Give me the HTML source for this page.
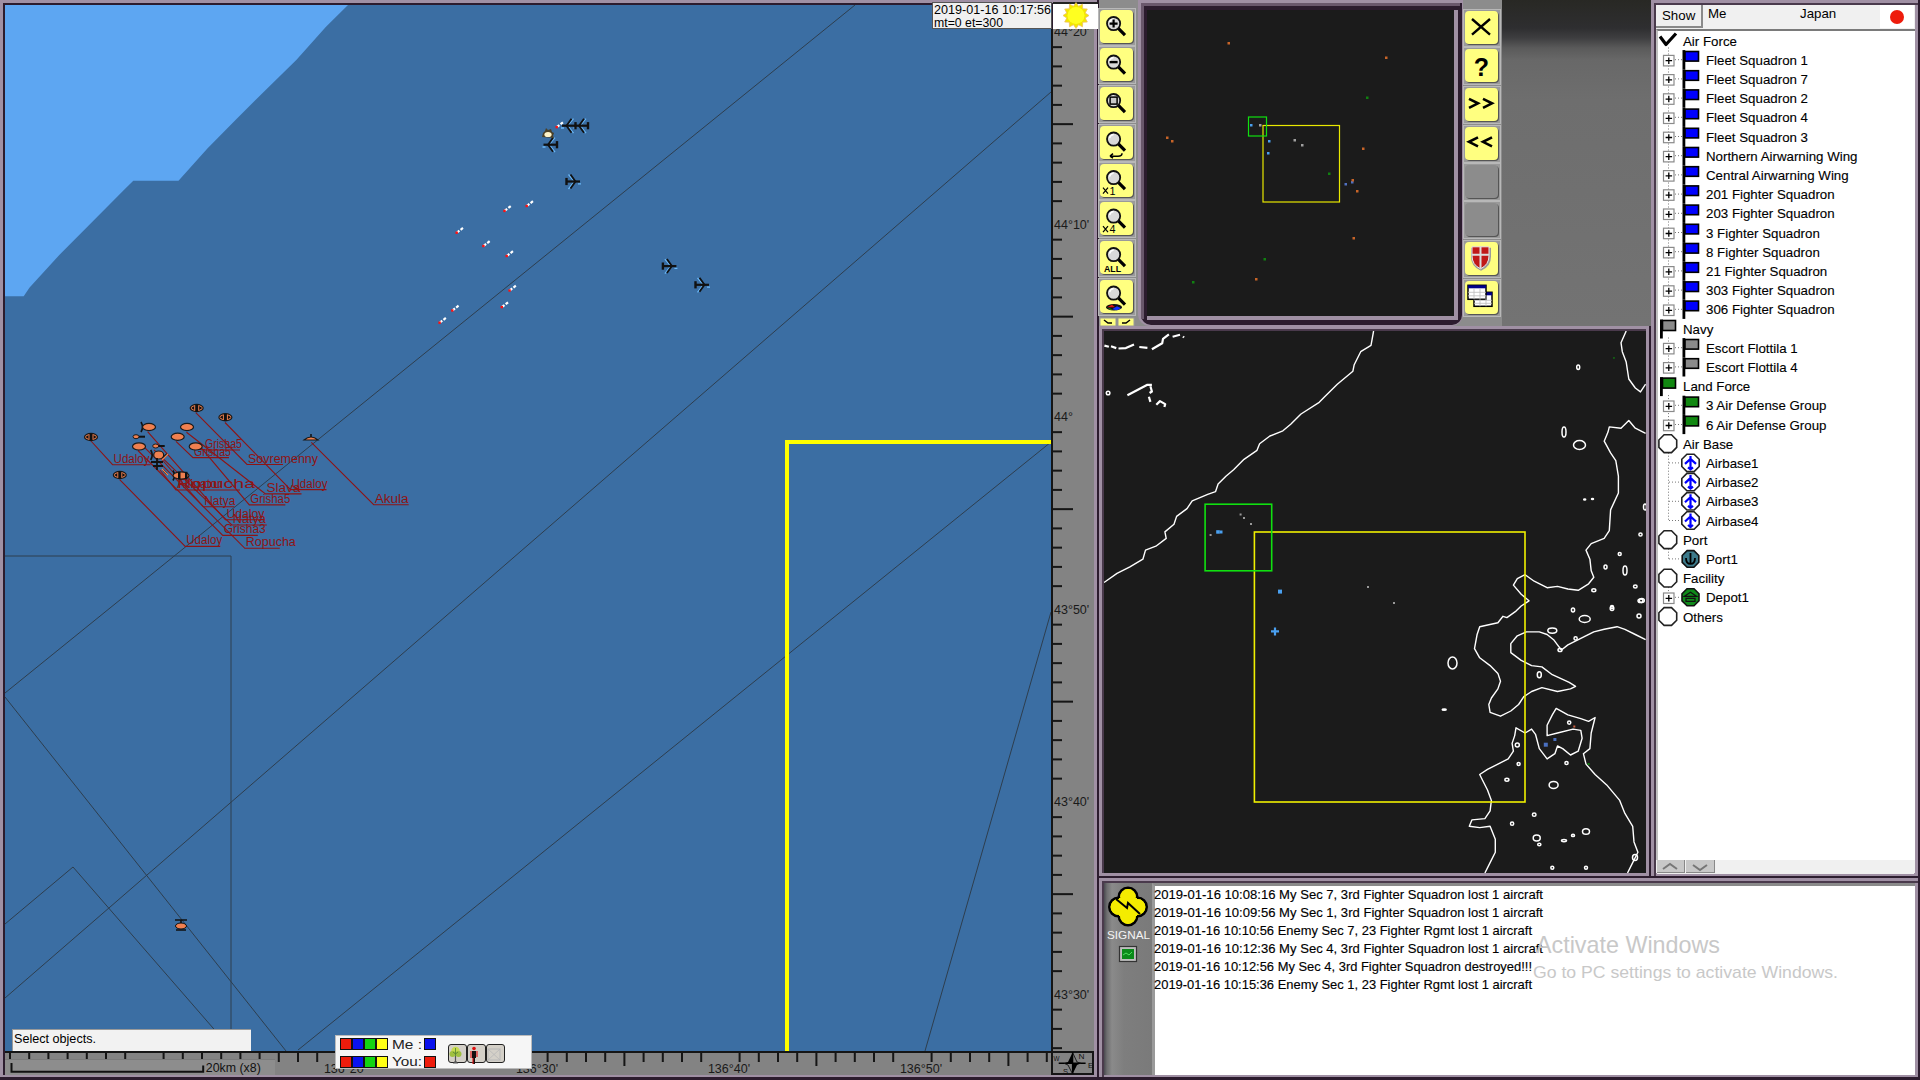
<!DOCTYPE html>
<html><head><meta charset="utf-8">
<style>
*{margin:0;padding:0;box-sizing:border-box}
html,body{width:1920px;height:1080px;overflow:hidden;background:#9d8da1;font-family:"Liberation Sans",sans-serif}
.a{position:absolute}
.t{white-space:nowrap;line-height:1}
svg{position:absolute;overflow:visible}
</style></head><body>
<div class="a" style="left:0px;top:0px;width:1099px;height:1080px;background:#a090a4;"></div>
<div class="a" style="left:3px;top:3px;width:1091px;height:1072px;background:#2c1c2e;"></div>
<div class="a" style="left:1097px;top:0px;width:2px;height:1080px;background:#2c1c2e;"></div>
<div class="a" style="left:0px;top:1077px;width:1099px;height:3px;background:#2c1c2e;"></div>
<div class="a" style="left:5px;top:5px;width:1046px;height:1046px;background:#3b6ea3;overflow:hidden">
<svg width="1046" height="1046" style="left:0;top:0">
<polygon points="343,0 321,21.7 291.3,55 261.7,83.9 232,113.5 202.4,143.5 173.5,175.7 128.3,175.7 119.4,184.6 83.9,220.2 54.3,250 24.6,282.4 18.7,291.3 0,291.3 0,0" fill="#5da6f2"/>
<line x1="850" y1="0" x2="0" y2="688" stroke="#2e3e4e" stroke-width="1"/>
<line x1="1046" y1="87" x2="0" y2="993" stroke="#2e3e4e" stroke-width="1"/>
<line x1="1046" y1="437" x2="293" y2="1045" stroke="#2e3e4e" stroke-width="1"/>
<line x1="0" y1="692" x2="281" y2="1046" stroke="#2e3e4e" stroke-width="1"/>
<line x1="0" y1="919" x2="68" y2="862" stroke="#2e3e4e" stroke-width="1"/>
<line x1="68" y1="862" x2="228" y2="1046" stroke="#2e3e4e" stroke-width="1"/>
<line x1="1046" y1="607" x2="920" y2="1046" stroke="#2e3e4e" stroke-width="1"/>
<line x1="0" y1="551" x2="226" y2="551" stroke="#2e3e4e" stroke-width="1"/>
<line x1="226" y1="551" x2="226" y2="1046" stroke="#2e3e4e" stroke-width="1"/>
<polyline points="782,1046 782,437 1046,437" fill="none" stroke="#ffff00" stroke-width="4"/>
</svg>
</div>
<svg width="1920" height="1080" style="left:0;top:0;overflow:hidden">
<path d="M91,441 L112.6,464.7 H150.6" fill="none" stroke="#8e1414" stroke-width="1.1"/>
<text x="113.6" y="462.7" font-size="12.5" fill="#8e1414" font-weight="normal" text-anchor="start" textLength="36" lengthAdjust="spacingAndGlyphs" >Udaloy</text>
<path d="M119.7,479.6 L185.2,546.4 H220.2" fill="none" stroke="#8e1414" stroke-width="1.1"/>
<text x="186.2" y="544.4" font-size="12.5" fill="#8e1414" font-weight="normal" text-anchor="start" textLength="36" lengthAdjust="spacingAndGlyphs" >Udaloy</text>
<path d="M196,449 L204,450 H240" fill="none" stroke="#8e1414" stroke-width="1.1"/>
<text x="205" y="448" font-size="12.5" fill="#8e1414" font-weight="normal" text-anchor="start" textLength="37" lengthAdjust="spacingAndGlyphs" >Grisha5</text>
<path d="M176,441.4 L193,457.6 H229" fill="none" stroke="#8e1414" stroke-width="1.1"/>
<text x="194" y="455.6" font-size="12.5" fill="#8e1414" font-weight="normal" text-anchor="start" textLength="37" lengthAdjust="spacingAndGlyphs" >Grisha5</text>
<path d="M195.8,412.7 L247,464.5 H283" fill="none" stroke="#8e1414" stroke-width="1.1"/>
<text x="248" y="462.5" font-size="12.5" fill="#8e1414" font-weight="normal" text-anchor="start" textLength="70" lengthAdjust="spacingAndGlyphs" >Sovremenny</text>
<path d="M225,422.5 L290.5,489.6 H326.5" fill="none" stroke="#8e1414" stroke-width="1.1"/>
<text x="291.5" y="487.6" font-size="12.5" fill="#8e1414" font-weight="normal" text-anchor="start" textLength="36" lengthAdjust="spacingAndGlyphs" >Udaloy</text>
<path d="M186.5,432.3 L265.5,493.9 H301.5" fill="none" stroke="#8e1414" stroke-width="1.1"/>
<text x="266.5" y="491.9" font-size="12.5" fill="#8e1414" font-weight="normal" text-anchor="start" textLength="34" lengthAdjust="spacingAndGlyphs" >Slava</text>
<path d="M200.7,447.2 L249.3,504.9 H285.3" fill="none" stroke="#8e1414" stroke-width="1.1"/>
<text x="250.3" y="502.9" font-size="12.5" fill="#8e1414" font-weight="normal" text-anchor="start" textLength="40" lengthAdjust="spacingAndGlyphs" >Grisha5</text>
<path d="M137.9,450.5 L222.8,535.4 H257.8" fill="none" stroke="#8e1414" stroke-width="1.1"/>
<text x="223.8" y="533.4" font-size="12.5" fill="#8e1414" font-weight="normal" text-anchor="start" textLength="42" lengthAdjust="spacingAndGlyphs" >Grisha3</text>
<path d="M141.8,444.6 L244.8,548.3 H279.8" fill="none" stroke="#8e1414" stroke-width="1.1"/>
<text x="245.8" y="546.3" font-size="12.5" fill="#8e1414" font-weight="normal" text-anchor="start" textLength="50" lengthAdjust="spacingAndGlyphs" >Ropucha</text>
<path d="M147.6,431.7 L225.4,519.8 H264.4" fill="none" stroke="#8e1414" stroke-width="1.1"/>
<text x="226.4" y="517.8" font-size="12.5" fill="#8e1414" font-weight="normal" text-anchor="start" textLength="38" lengthAdjust="spacingAndGlyphs" >Udaloy</text>
<path d="M158,455 L203.3,506.8 H234.3" fill="none" stroke="#8e1414" stroke-width="1.1"/>
<text x="204.3" y="504.8" font-size="12.5" fill="#8e1414" font-weight="normal" text-anchor="start" textLength="31" lengthAdjust="spacingAndGlyphs" >Natya</text>
<path d="M154,449.8 L231.8,525 H266.8" fill="none" stroke="#8e1414" stroke-width="1.1"/>
<text x="232.8" y="523" font-size="12.5" fill="#8e1414" font-weight="normal" text-anchor="start" textLength="33" lengthAdjust="spacingAndGlyphs" >Natya</text>
<path d="M160,470 L176,490 H240" fill="none" stroke="#8e1414" stroke-width="1.1"/>
<text x="177" y="488" font-size="12.5" fill="#8e1414" font-weight="normal" text-anchor="start" textLength="78" lengthAdjust="spacingAndGlyphs" >Ropucha</text>
<text x="177" y="488" font-size="12.5" fill="#8e1414" font-weight="normal" text-anchor="start" textLength="44" lengthAdjust="spacingAndGlyphs" >Alligator</text>
<path d="M311.3,442.3 L373.7,504.7 H408.7" fill="none" stroke="#8e1414" stroke-width="1.1"/>
<text x="374.7" y="502.7" font-size="12.5" fill="#8e1414" font-weight="normal" text-anchor="start" textLength="34" lengthAdjust="spacingAndGlyphs" >Akula</text>
<ellipse cx="91" cy="437" rx="6.5" ry="3.6" fill="#f08050" stroke="#1a1a1a" stroke-width="1.2"/>
<rect x="89.5" y="433.4" width="3" height="7.2" fill="#111"/>
<path d="M85.5,437 l3,-2 v4 z M96.5,437 l-3,-2 v4 z" fill="#111"/>
<ellipse cx="196.7" cy="408" rx="6.5" ry="3.6" fill="#f08050" stroke="#1a1a1a" stroke-width="1.2"/>
<rect x="195.2" y="404.4" width="3" height="7.2" fill="#111"/>
<path d="M191.2,408 l3,-2 v4 z M202.2,408 l-3,-2 v4 z" fill="#111"/>
<ellipse cx="225.4" cy="417.2" rx="6.5" ry="3.6" fill="#f08050" stroke="#1a1a1a" stroke-width="1.2"/>
<rect x="223.9" y="413.59999999999997" width="3" height="7.2" fill="#111"/>
<path d="M219.9,417.2 l3,-2 v4 z M230.9,417.2 l-3,-2 v4 z" fill="#111"/>
<ellipse cx="119.8" cy="475" rx="6.5" ry="3.6" fill="#f08050" stroke="#1a1a1a" stroke-width="1.2"/>
<rect x="118.3" y="471.4" width="3" height="7.2" fill="#111"/>
<path d="M114.3,475 l3,-2 v4 z M125.3,475 l-3,-2 v4 z" fill="#111"/>
<path d="M141,422 q3,5 0,10" fill="none" stroke="#111" stroke-width="1.6"/>
<ellipse cx="149" cy="427" rx="6.5" ry="3.6" fill="#f08050" stroke="#1a1a1a" stroke-width="1.2"/>
<ellipse cx="187" cy="427" rx="6.5" ry="3.6" fill="#f08050" stroke="#1a1a1a" stroke-width="1.2"/>
<ellipse cx="177.7" cy="436.7" rx="6.5" ry="3.6" fill="#f08050" stroke="#1a1a1a" stroke-width="1.2"/>
<ellipse cx="139" cy="446.4" rx="6.5" ry="3.6" fill="#f08050" stroke="#1a1a1a" stroke-width="1.2"/>
<ellipse cx="195.7" cy="446.4" rx="6.5" ry="3.6" fill="#f08050" stroke="#1a1a1a" stroke-width="1.2"/>
<ellipse cx="136" cy="436.7" rx="3" ry="2" fill="#f08050" stroke="#1a1a1a" stroke-width="1"/>
<rect x="139" y="435.7" width="6" height="2" fill="#111"/>
<ellipse cx="155.7" cy="446" rx="3" ry="2" fill="#f08050" stroke="#1a1a1a" stroke-width="1"/>
<rect x="158.7" y="445" width="6" height="2" fill="#111"/>
<path d="M150.7,450 q3,5 0,10" fill="none" stroke="#111" stroke-width="1.6"/>
<ellipse cx="158.7" cy="455" rx="5" ry="4" fill="#f08050" stroke="#1a1a1a" stroke-width="1.2"/>
<path d="M173,470.5 q3,5 0,10" fill="none" stroke="#111" stroke-width="1.6"/>
<ellipse cx="181" cy="475.5" rx="8" ry="3.6" fill="#f08050" stroke="#1a1a1a" stroke-width="1.2"/>
<rect x="178" y="471.8" width="2.5" height="7.4" fill="#111"/><rect x="185" y="471.8" width="2.5" height="7.4" fill="#111"/>
<path d="M151,462 h12 M153,466 h10 M157,458 v12 M163,458 l4,-4 M163,470 l4,4" stroke="#111" stroke-width="1.8"/>
<path d="M162,460 l6,-6 M162,469 l6,6" stroke="#f08050" stroke-width="1.2"/>
<path d="M304,440 q7,-6 14,0 z" fill="#f08050" stroke="#1a1a1a" stroke-width="1.2"/><path d="M311,434 v3" stroke="#111" stroke-width="1.5"/>
<ellipse cx="181" cy="926" rx="5.5" ry="3" fill="#f08050" stroke="#111" stroke-width="1"/><path d="M175,920 h12 M181,920 v3 M176,930 h10" stroke="#111" stroke-width="1.6"/>
<path d="M586.0,118.7 L581.0,124.7 M581.0,126.7 L586.0,133.2 M576.5,128.0 h-3" fill="none" stroke="#6ab8f8" stroke-width="1.3"/>
<path d="M588.0,125.7 H574.5" stroke="#111" stroke-width="2.2"/>
<path d="M588.0,122.10000000000001 V129.3" stroke="#111" stroke-width="2.4"/>
<path d="M584.0,118.7 L579.0,125.7 L584.0,132.7" fill="none" stroke="#111" stroke-width="1.8"/>
<path d="M573.5,118.7 L568.5,124.7 M568.5,126.7 L573.5,133.2 M564,128.0 h-3" fill="none" stroke="#6ab8f8" stroke-width="1.3"/>
<path d="M575.5,125.7 H562" stroke="#111" stroke-width="2.2"/>
<path d="M575.5,122.10000000000001 V129.3" stroke="#111" stroke-width="2.4"/>
<path d="M571.5,118.7 L566.5,125.7 L571.5,132.7" fill="none" stroke="#111" stroke-width="1.8"/>
<path d="M555.0,137.7 L550.0,143.7 M550.0,145.7 L555.0,152.2 M545.5,147.0 h-3" fill="none" stroke="#6ab8f8" stroke-width="1.3"/>
<path d="M557.0,144.7 H543.5" stroke="#111" stroke-width="2.2"/>
<path d="M557.0,141.1 V148.29999999999998" stroke="#111" stroke-width="2.4"/>
<path d="M553.0,137.7 L548.0,144.7 L553.0,151.7" fill="none" stroke="#111" stroke-width="1.8"/>
<path d="M568.5,174.5 L573.5,180.5 M573.5,182.5 L568.5,189.0 M578,183.8 h3" fill="none" stroke="#6ab8f8" stroke-width="1.3"/>
<path d="M566.5,181.5 H580" stroke="#111" stroke-width="2.2"/>
<path d="M566.5,177.9 V185.1" stroke="#111" stroke-width="2.4"/>
<path d="M570.5,174.5 L575.5,181.5 L570.5,188.5" fill="none" stroke="#111" stroke-width="1.8"/>
<path d="M664.9,259.1 L669.9,265.1 M669.9,267.1 L664.9,273.6 M674.4,268.40000000000003 h3" fill="none" stroke="#6ab8f8" stroke-width="1.3"/>
<path d="M662.9,266.1 H676.4" stroke="#111" stroke-width="2.2"/>
<path d="M662.9,262.5 V269.70000000000005" stroke="#111" stroke-width="2.4"/>
<path d="M666.9,259.1 L671.9,266.1 L666.9,273.1" fill="none" stroke="#111" stroke-width="1.8"/>
<path d="M697.5,277.8 L702.5,283.8 M702.5,285.8 L697.5,292.3 M707,287.1 h3" fill="none" stroke="#6ab8f8" stroke-width="1.3"/>
<path d="M695.5,284.8 H709" stroke="#111" stroke-width="2.2"/>
<path d="M695.5,281.2 V288.40000000000003" stroke="#111" stroke-width="2.4"/>
<path d="M699.5,277.8 L704.5,284.8 L699.5,291.8" fill="none" stroke="#111" stroke-width="1.8"/>
<path d="M542,137 l1,-4 l2,-2 l1,-3 l2,2 l3,-1 l1,3 l2,1 l-1,3 l1,2 z" fill="#4a4028"/><ellipse cx="548" cy="134.5" rx="3.6" ry="2.6" fill="#fff4c8"/>
<path d="M557,126.9 L563.5,121.9" stroke="#ffffff" stroke-width="2.2" stroke-dasharray="3,1.5"/><rect x="555.5" y="125.9" width="2.4" height="2.4" fill="#ff1010"/>
<path d="M527,205.8 L533.5,200.8" stroke="#ffffff" stroke-width="2.2" stroke-dasharray="3,1.5"/><rect x="525.5" y="204.8" width="2.4" height="2.4" fill="#ff1010"/>
<path d="M504.8,210.7 L511.3,205.7" stroke="#ffffff" stroke-width="2.2" stroke-dasharray="3,1.5"/><rect x="503.3" y="209.7" width="2.4" height="2.4" fill="#ff1010"/>
<path d="M457,232.5 L463.5,227.5" stroke="#ffffff" stroke-width="2.2" stroke-dasharray="3,1.5"/><rect x="455.5" y="231.5" width="2.4" height="2.4" fill="#ff1010"/>
<path d="M483.7,245.8 L490.2,240.8" stroke="#ffffff" stroke-width="2.2" stroke-dasharray="3,1.5"/><rect x="482.2" y="244.8" width="2.4" height="2.4" fill="#ff1010"/>
<path d="M507,255.8 L513.5,250.8" stroke="#ffffff" stroke-width="2.2" stroke-dasharray="3,1.5"/><rect x="505.5" y="254.8" width="2.4" height="2.4" fill="#ff1010"/>
<path d="M509.9,290.3 L516.4,285.3" stroke="#ffffff" stroke-width="2.2" stroke-dasharray="3,1.5"/><rect x="508.4" y="289.3" width="2.4" height="2.4" fill="#ff1010"/>
<path d="M452.6,310.3 L459.1,305.3" stroke="#ffffff" stroke-width="2.2" stroke-dasharray="3,1.5"/><rect x="451.1" y="309.3" width="2.4" height="2.4" fill="#ff1010"/>
<path d="M502.1,306.9 L508.6,301.9" stroke="#ffffff" stroke-width="2.2" stroke-dasharray="3,1.5"/><rect x="500.6" y="305.9" width="2.4" height="2.4" fill="#ff1010"/>
<path d="M439.9,322.5 L446.4,317.5" stroke="#ffffff" stroke-width="2.2" stroke-dasharray="3,1.5"/><rect x="438.4" y="321.5" width="2.4" height="2.4" fill="#ff1010"/>
</svg>
<div class="a" style="left:1051px;top:29px;width:43px;height:1022px;background:#838383;border-left:2px solid #151515"></div>
<div class="a" style="left:5px;top:1051px;width:1046px;height:24px;background:#838383;border-top:2px solid #151515"></div>
<div class="a" style="left:1051px;top:1051px;width:43px;height:24px;background:#838383;border:2px solid #151515"></div>
<svg width="1920" height="1080" style="left:0;top:0">
<rect x="1052" y="46.15" width="10" height="2" fill="#151515"/>
<rect x="1052" y="65.40" width="10" height="2" fill="#151515"/>
<rect x="1052" y="84.65" width="10" height="2" fill="#151515"/>
<rect x="1052" y="103.90" width="10" height="2" fill="#151515"/>
<rect x="1052" y="123.15" width="21" height="2" fill="#151515"/>
<rect x="1052" y="142.40" width="10" height="2" fill="#151515"/>
<rect x="1052" y="161.65" width="10" height="2" fill="#151515"/>
<rect x="1052" y="180.90" width="10" height="2" fill="#151515"/>
<rect x="1052" y="200.15" width="10" height="2" fill="#151515"/>
<rect x="1052" y="238.65" width="10" height="2" fill="#151515"/>
<rect x="1052" y="257.90" width="10" height="2" fill="#151515"/>
<rect x="1052" y="277.15" width="10" height="2" fill="#151515"/>
<rect x="1052" y="296.40" width="10" height="2" fill="#151515"/>
<rect x="1052" y="315.65" width="21" height="2" fill="#151515"/>
<rect x="1052" y="334.90" width="10" height="2" fill="#151515"/>
<rect x="1052" y="354.15" width="10" height="2" fill="#151515"/>
<rect x="1052" y="373.40" width="10" height="2" fill="#151515"/>
<rect x="1052" y="392.65" width="10" height="2" fill="#151515"/>
<rect x="1052" y="431.15" width="10" height="2" fill="#151515"/>
<rect x="1052" y="450.40" width="10" height="2" fill="#151515"/>
<rect x="1052" y="469.65" width="10" height="2" fill="#151515"/>
<rect x="1052" y="488.90" width="10" height="2" fill="#151515"/>
<rect x="1052" y="508.15" width="21" height="2" fill="#151515"/>
<rect x="1052" y="527.40" width="10" height="2" fill="#151515"/>
<rect x="1052" y="546.65" width="10" height="2" fill="#151515"/>
<rect x="1052" y="565.90" width="10" height="2" fill="#151515"/>
<rect x="1052" y="585.15" width="10" height="2" fill="#151515"/>
<rect x="1052" y="623.65" width="10" height="2" fill="#151515"/>
<rect x="1052" y="642.90" width="10" height="2" fill="#151515"/>
<rect x="1052" y="662.15" width="10" height="2" fill="#151515"/>
<rect x="1052" y="681.40" width="10" height="2" fill="#151515"/>
<rect x="1052" y="700.65" width="21" height="2" fill="#151515"/>
<rect x="1052" y="719.90" width="10" height="2" fill="#151515"/>
<rect x="1052" y="739.15" width="10" height="2" fill="#151515"/>
<rect x="1052" y="758.40" width="10" height="2" fill="#151515"/>
<rect x="1052" y="777.65" width="10" height="2" fill="#151515"/>
<rect x="1052" y="816.15" width="10" height="2" fill="#151515"/>
<rect x="1052" y="835.40" width="10" height="2" fill="#151515"/>
<rect x="1052" y="854.65" width="10" height="2" fill="#151515"/>
<rect x="1052" y="873.90" width="10" height="2" fill="#151515"/>
<rect x="1052" y="893.15" width="21" height="2" fill="#151515"/>
<rect x="1052" y="912.40" width="10" height="2" fill="#151515"/>
<rect x="1052" y="931.65" width="10" height="2" fill="#151515"/>
<rect x="1052" y="950.90" width="10" height="2" fill="#151515"/>
<rect x="1052" y="970.15" width="10" height="2" fill="#151515"/>
<rect x="1052" y="1008.65" width="10" height="2" fill="#151515"/>
<rect x="1052" y="1027.90" width="10" height="2" fill="#151515"/>
<rect x="1052" y="1047.15" width="10" height="2" fill="#151515"/>
<text x="1054" y="36.2" font-size="12.5" fill="#1a1a1a" font-weight="normal" text-anchor="start" >44°20'</text>
<text x="1054" y="228.7" font-size="12.5" fill="#1a1a1a" font-weight="normal" text-anchor="start" >44°10'</text>
<text x="1054" y="421.2" font-size="12.5" fill="#1a1a1a" font-weight="normal" text-anchor="start" >44°</text>
<text x="1054" y="613.7" font-size="12.5" fill="#1a1a1a" font-weight="normal" text-anchor="start" >43°50'</text>
<text x="1054" y="806.2" font-size="12.5" fill="#1a1a1a" font-weight="normal" text-anchor="start" >43°40'</text>
<text x="1054" y="998.7" font-size="12.5" fill="#1a1a1a" font-weight="normal" text-anchor="start" >43°30'</text>
<rect x="9.00" y="1052" width="2" height="10" fill="#151515"/>
<rect x="28.20" y="1052" width="2" height="10" fill="#151515"/>
<rect x="47.40" y="1052" width="2" height="14" fill="#151515"/>
<rect x="66.60" y="1052" width="2" height="10" fill="#151515"/>
<rect x="85.80" y="1052" width="2" height="10" fill="#151515"/>
<rect x="105.00" y="1052" width="2" height="10" fill="#151515"/>
<rect x="124.20" y="1052" width="2" height="10" fill="#151515"/>
<rect x="162.60" y="1052" width="2" height="10" fill="#151515"/>
<rect x="181.80" y="1052" width="2" height="10" fill="#151515"/>
<rect x="201.00" y="1052" width="2" height="10" fill="#151515"/>
<rect x="220.20" y="1052" width="2" height="10" fill="#151515"/>
<rect x="239.40" y="1052" width="2" height="14" fill="#151515"/>
<rect x="258.60" y="1052" width="2" height="10" fill="#151515"/>
<rect x="277.80" y="1052" width="2" height="10" fill="#151515"/>
<rect x="297.00" y="1052" width="2" height="10" fill="#151515"/>
<rect x="316.20" y="1052" width="2" height="10" fill="#151515"/>
<rect x="354.60" y="1052" width="2" height="10" fill="#151515"/>
<rect x="373.80" y="1052" width="2" height="10" fill="#151515"/>
<rect x="393.00" y="1052" width="2" height="10" fill="#151515"/>
<rect x="412.20" y="1052" width="2" height="10" fill="#151515"/>
<rect x="431.40" y="1052" width="2" height="14" fill="#151515"/>
<rect x="450.60" y="1052" width="2" height="10" fill="#151515"/>
<rect x="469.80" y="1052" width="2" height="10" fill="#151515"/>
<rect x="489.00" y="1052" width="2" height="10" fill="#151515"/>
<rect x="508.20" y="1052" width="2" height="10" fill="#151515"/>
<rect x="546.60" y="1052" width="2" height="10" fill="#151515"/>
<rect x="565.80" y="1052" width="2" height="10" fill="#151515"/>
<rect x="585.00" y="1052" width="2" height="10" fill="#151515"/>
<rect x="604.20" y="1052" width="2" height="10" fill="#151515"/>
<rect x="623.40" y="1052" width="2" height="14" fill="#151515"/>
<rect x="642.60" y="1052" width="2" height="10" fill="#151515"/>
<rect x="661.80" y="1052" width="2" height="10" fill="#151515"/>
<rect x="681.00" y="1052" width="2" height="10" fill="#151515"/>
<rect x="700.20" y="1052" width="2" height="10" fill="#151515"/>
<rect x="738.60" y="1052" width="2" height="10" fill="#151515"/>
<rect x="757.80" y="1052" width="2" height="10" fill="#151515"/>
<rect x="777.00" y="1052" width="2" height="10" fill="#151515"/>
<rect x="796.20" y="1052" width="2" height="10" fill="#151515"/>
<rect x="815.40" y="1052" width="2" height="14" fill="#151515"/>
<rect x="834.60" y="1052" width="2" height="10" fill="#151515"/>
<rect x="853.80" y="1052" width="2" height="10" fill="#151515"/>
<rect x="873.00" y="1052" width="2" height="10" fill="#151515"/>
<rect x="892.20" y="1052" width="2" height="10" fill="#151515"/>
<rect x="930.60" y="1052" width="2" height="10" fill="#151515"/>
<rect x="949.80" y="1052" width="2" height="10" fill="#151515"/>
<rect x="969.00" y="1052" width="2" height="10" fill="#151515"/>
<rect x="988.20" y="1052" width="2" height="10" fill="#151515"/>
<rect x="1007.40" y="1052" width="2" height="14" fill="#151515"/>
<rect x="1026.60" y="1052" width="2" height="10" fill="#151515"/>
<rect x="1045.80" y="1052" width="2" height="10" fill="#151515"/>
<text x="345.0" y="1072.8" font-size="12.5" fill="#1a1a1a" font-weight="normal" text-anchor="middle" >136°20'</text>
<text x="537.0" y="1072.8" font-size="12.5" fill="#1a1a1a" font-weight="normal" text-anchor="middle" >136°30'</text>
<text x="729.0" y="1072.8" font-size="12.5" fill="#1a1a1a" font-weight="normal" text-anchor="middle" >136°40'</text>
<text x="921.0" y="1072.8" font-size="12.5" fill="#1a1a1a" font-weight="normal" text-anchor="middle" >136°50'</text>
</svg>
<div class="a" style="left:5px;top:1059px;width:270px;height:16px;background:#8d8d8d;border-top:1px solid #7a7a7a"></div>
<svg width="300" height="30" style="left:0;top:1050px"><path d="M11.5,13 V21.8 H203.2 V15.5" fill="none" stroke="#111" stroke-width="2"/></svg>
<div class="a" style="left:12px;top:1029px;width:239px;height:22px;background:#f2f2f2;border-top:1px solid #999;border-left:1px solid #999"></div>
<div class="a" style="left:335px;top:1035px;width:197px;height:34px;background:#f6f6f6;border:1px solid #bbb"></div>
<div class="a" style="left:339.5px;top:1038px;width:12.5px;height:12px;background:#ee1c0c;border:1px solid #111"></div>
<div class="a" style="left:351.5px;top:1038px;width:12.5px;height:12px;background:#0a12ee;border:1px solid #111"></div>
<div class="a" style="left:363.5px;top:1038px;width:12.5px;height:12px;background:#12d412;border:1px solid #111"></div>
<div class="a" style="left:375.5px;top:1038px;width:12.5px;height:12px;background:#ffff14;border:1px solid #111"></div>
<div class="a" style="left:339.5px;top:1055.5px;width:12.5px;height:12px;background:#ee1c0c;border:1px solid #111"></div>
<div class="a" style="left:351.5px;top:1055.5px;width:12.5px;height:12px;background:#0a12ee;border:1px solid #111"></div>
<div class="a" style="left:363.5px;top:1055.5px;width:12.5px;height:12px;background:#12d412;border:1px solid #111"></div>
<div class="a" style="left:375.5px;top:1055.5px;width:12.5px;height:12px;background:#ffff14;border:1px solid #111"></div>
<div class="a" style="left:424px;top:1038px;width:12px;height:12px;background:#0a12ee;border:1px solid #111"></div>
<div class="a" style="left:424px;top:1055.5px;width:12px;height:12px;background:#ee1c0c;border:1px solid #111"></div>
<div class="a" style="left:447.5px;top:1044px;width:19px;height:19px;background:#d4d0c8;border:1px solid #222;border-radius:3px"></div>
<div class="a" style="left:466.5px;top:1044px;width:19px;height:19px;background:#d4d0c8;border:1px solid #222;border-radius:3px"></div>
<div class="a" style="left:485.5px;top:1044px;width:19px;height:19px;background:#d4d0c8;border:1px solid #222;border-radius:3px"></div>
<svg width="80" height="30" style="left:440px;top:1040px">
<path d="M15.5,16 v5 l-1.5,2 h3 l-1.5,-2" stroke="#555" stroke-width="1.2" fill="#777"/>
<circle cx="15.5" cy="11" r="4.2" fill="#c8dc50"/><circle cx="12.5" cy="14" r="3" fill="#a0c040"/><circle cx="18.5" cy="14" r="3" fill="#a0c040"/><path d="M15.5,8 v8 M13,12 l2.5,2 l2.5,-2" stroke="#508030" stroke-width="0.8" fill="none"/>
<circle cx="34" cy="8.5" r="1.8" fill="#e01010"/><path d="M32,11 h4 v7 h-1 v6 h-2 v-6 h-1 z" fill="#111"/><path d="M31,11 v7 M37,11 v6 M33,18 v6" stroke="#e01010" stroke-width="1.1"/>
<rect x="48" y="9" width="12" height="11" fill="none" stroke="#b8b8b8" stroke-width="1"/><path d="M48,9 l12,11 M60,9 l-12,11" stroke="#b8b8b8" stroke-width="0.8"/>
</svg>
<svg width="44" height="25" style="left:1051px;top:1051px">
<path d="M7.7,12.3 H34.6 M21.6,1 V23" stroke="#000" stroke-width="1.4"/>
<path d="M21.6,1.5 L17,11 L13,12.3 L21.6,12.3 Z M21.6,23 L26,14 L30,12.3 L21.6,12.3 Z" fill="#000"/>
<path d="M21.6,1.5 L26,11 L30,12.3 M21.6,23 L17,14 L13,12.3" fill="none" stroke="#111" stroke-width="0.9"/>
</svg>
<svg width="1920" height="1080" style="left:0;top:0"><text x="1053.5" y="1061" font-size="8" fill="#111" font-weight="normal" text-anchor="start" textLength="6" lengthAdjust="spacingAndGlyphs" >W</text><text x="1078.5" y="1059" font-size="8" fill="#111" font-weight="normal" text-anchor="start" textLength="6" lengthAdjust="spacingAndGlyphs" >N</text><text x="1088" y="1067.5" font-size="8" fill="#111" font-weight="normal" text-anchor="start" textLength="5" lengthAdjust="spacingAndGlyphs" >E</text><text x="1063" y="1074" font-size="8" fill="#111" font-weight="normal" text-anchor="start" textLength="5" lengthAdjust="spacingAndGlyphs" >S</text></svg>
<div class="a" style="left:932px;top:2px;width:120px;height:27px;background:#f0f0f0;border:1px solid #555"></div>
<div class="a" style="left:1053px;top:2px;width:45px;height:27px;background:#ffffff;border-top:2px solid #222"></div>
<svg width="1920" height="40" style="left:0;top:0"><polygon points="1089.0,15.5 1085.2,18.0 1087.3,22.0 1082.7,22.2 1082.5,26.8 1078.5,24.7 1076.0,28.5 1073.5,24.7 1069.5,26.8 1069.3,22.2 1064.7,22.0 1066.8,18.0 1063.0,15.5 1066.8,13.0 1064.7,9.0 1069.3,8.8 1069.5,4.2 1073.5,6.3 1076.0,2.5 1078.5,6.3 1082.5,4.2 1082.7,8.8 1087.3,9.0 1085.2,13.0" fill="#f2e800" stroke="#f0c060" stroke-width="0.8"/><circle cx="1076" cy="15.5" r="8.5" fill="#ffff20"/></svg>
<div class="a" style="left:1099px;top:0px;width:39px;height:330px;background:#8c8c8c;"></div>
<div class="a" style="left:1098px;top:8px;width:38px;height:38px;background:#9a9a9a;border:1px solid #b8b8b8"></div>
<div class="a" style="left:1100px;top:10px;width:33px;height:33px;background:#ffff80;border-radius:4px;box-shadow:1px 1px 0 #555"></div>
<div class="a" style="left:1098px;top:46px;width:38px;height:38px;background:#9a9a9a;border:1px solid #b8b8b8"></div>
<div class="a" style="left:1100px;top:48px;width:33px;height:33px;background:#ffff80;border-radius:4px;box-shadow:1px 1px 0 #555"></div>
<div class="a" style="left:1098px;top:85px;width:38px;height:38px;background:#9a9a9a;border:1px solid #b8b8b8"></div>
<div class="a" style="left:1100px;top:87px;width:33px;height:33px;background:#ffff80;border-radius:4px;box-shadow:1px 1px 0 #555"></div>
<div class="a" style="left:1098px;top:124px;width:38px;height:38px;background:#9a9a9a;border:1px solid #b8b8b8"></div>
<div class="a" style="left:1100px;top:126px;width:33px;height:33px;background:#ffff80;border-radius:4px;box-shadow:1px 1px 0 #555"></div>
<div class="a" style="left:1098px;top:162px;width:38px;height:38px;background:#9a9a9a;border:1px solid #b8b8b8"></div>
<div class="a" style="left:1100px;top:164px;width:33px;height:33px;background:#ffff80;border-radius:4px;box-shadow:1px 1px 0 #555"></div>
<div class="a" style="left:1098px;top:200px;width:38px;height:38px;background:#9a9a9a;border:1px solid #b8b8b8"></div>
<div class="a" style="left:1100px;top:202px;width:33px;height:33px;background:#ffff80;border-radius:4px;box-shadow:1px 1px 0 #555"></div>
<div class="a" style="left:1098px;top:239px;width:38px;height:38px;background:#9a9a9a;border:1px solid #b8b8b8"></div>
<div class="a" style="left:1100px;top:241px;width:33px;height:33px;background:#ffff80;border-radius:4px;box-shadow:1px 1px 0 #555"></div>
<div class="a" style="left:1098px;top:278px;width:38px;height:38px;background:#9a9a9a;border:1px solid #b8b8b8"></div>
<div class="a" style="left:1100px;top:280px;width:33px;height:33px;background:#ffff80;border-radius:4px;box-shadow:1px 1px 0 #555"></div>
<div class="a" style="left:1138px;top:0px;width:325px;height:326px;background:#8c8c8c;"></div>
<div class="a" style="left:1138px;top:0px;width:325px;height:326px;background:#a090a4;border-radius:0 0 12px 12px"></div>
<div class="a" style="left:1141px;top:3px;width:321px;height:322px;background:#2c1c2e;border-radius:0 0 10px 10px"></div>
<div class="a" style="left:1141px;top:3px;width:319px;height:3px;background:#6a586c;"></div>
<div class="a" style="left:1141px;top:3px;width:3px;height:316px;background:#6a586c;"></div>
<div class="a" style="left:1147px;top:10px;width:307px;height:307px;background:#1b1b1b;"></div>
<div class="a" style="left:1454px;top:10px;width:4px;height:310px;background:#a090a4;"></div>
<div class="a" style="left:1147px;top:316px;width:311px;height:4px;background:#a090a4;"></div>
<div class="a" style="left:1463px;top:0px;width:39px;height:326px;background:#8c8c8c;"></div>
<div class="a" style="left:1463px;top:9px;width:38px;height:38px;background:#9a9a9a;border:1px solid #b8b8b8"></div>
<div class="a" style="left:1465px;top:11px;width:33px;height:33px;background:#ffff80;border-radius:4px;box-shadow:1px 1px 0 #555"></div>
<div class="a" style="left:1463px;top:47px;width:38px;height:38px;background:#9a9a9a;border:1px solid #b8b8b8"></div>
<div class="a" style="left:1465px;top:49px;width:33px;height:33px;background:#ffff80;border-radius:4px;box-shadow:1px 1px 0 #555"></div>
<div class="a" style="left:1463px;top:86px;width:38px;height:38px;background:#9a9a9a;border:1px solid #b8b8b8"></div>
<div class="a" style="left:1465px;top:88px;width:33px;height:33px;background:#ffff80;border-radius:4px;box-shadow:1px 1px 0 #555"></div>
<div class="a" style="left:1463px;top:125px;width:38px;height:38px;background:#9a9a9a;border:1px solid #b8b8b8"></div>
<div class="a" style="left:1465px;top:127px;width:33px;height:33px;background:#ffff80;border-radius:4px;box-shadow:1px 1px 0 #555"></div>
<div class="a" style="left:1463px;top:163px;width:38px;height:38px;background:#9a9a9a;border:1px solid #b8b8b8"></div>
<div class="a" style="left:1465px;top:165px;width:33px;height:33px;background:#8c8c8c;border-radius:4px;box-shadow:1px 1px 0 #555"></div>
<div class="a" style="left:1463px;top:201px;width:38px;height:38px;background:#9a9a9a;border:1px solid #b8b8b8"></div>
<div class="a" style="left:1465px;top:203px;width:33px;height:33px;background:#8c8c8c;border-radius:4px;box-shadow:1px 1px 0 #555"></div>
<div class="a" style="left:1463px;top:240px;width:38px;height:38px;background:#9a9a9a;border:1px solid #b8b8b8"></div>
<div class="a" style="left:1465px;top:242px;width:33px;height:33px;background:#ffff80;border-radius:4px;box-shadow:1px 1px 0 #555"></div>
<div class="a" style="left:1463px;top:279px;width:38px;height:38px;background:#9a9a9a;border:1px solid #b8b8b8"></div>
<div class="a" style="left:1465px;top:281px;width:33px;height:33px;background:#ffff80;border-radius:4px;box-shadow:1px 1px 0 #555"></div>
<svg width="1920" height="340" style="left:0;top:0">
<line x1="1118.1" y1="28.1" x2="1125" y2="35.2" stroke="#000" stroke-width="3.2"/>
<circle cx="1113.6" cy="23.6" r="6.6" fill="#d9d9d9" stroke="#111" stroke-width="1.8"/>
<path d="M1109.6,22.6 a4.5,4.5 0 0 1 4,-3.6" stroke="#fff" stroke-width="1.4" fill="none"/>
<path d="M1109.6,23.6 h8 M1113.6,19.6 v8" stroke="#000" stroke-width="2.2"/>
<line x1="1118.1" y1="66.6" x2="1125" y2="73.7" stroke="#000" stroke-width="3.2"/>
<circle cx="1113.6" cy="62.1" r="6.6" fill="#d9d9d9" stroke="#111" stroke-width="1.8"/>
<path d="M1109.6,61.1 a4.5,4.5 0 0 1 4,-3.6" stroke="#fff" stroke-width="1.4" fill="none"/>
<path d="M1109.6,62.1 h8" stroke="#000" stroke-width="2.4"/>
<line x1="1118.1" y1="105.10000000000001" x2="1125" y2="112.2" stroke="#000" stroke-width="3.2"/>
<circle cx="1113.6" cy="100.60000000000001" r="6.6" fill="#d9d9d9" stroke="#111" stroke-width="1.8"/>
<path d="M1109.6,99.60000000000001 a4.5,4.5 0 0 1 4,-3.6" stroke="#fff" stroke-width="1.4" fill="none"/>
<rect x="1110.1" y="97.10000000000001" width="7" height="7" fill="#c8c8c8" stroke="#000" stroke-width="1.5"/>
<line x1="1118.1" y1="143.6" x2="1125" y2="150.7" stroke="#000" stroke-width="3.2"/>
<circle cx="1113.6" cy="139.1" r="6.6" fill="#d9d9d9" stroke="#111" stroke-width="1.8"/>
<path d="M1109.6,138.1 a4.5,4.5 0 0 1 4,-3.6" stroke="#fff" stroke-width="1.4" fill="none"/>
<path d="M1122,153.2 q0,3 -4,3 h-8 M1110,156.2 l3,-2.5 M1110,156.2 l3,2" fill="none" stroke="#000" stroke-width="1.5"/>
<line x1="1118.1" y1="182.1" x2="1125" y2="189.2" stroke="#000" stroke-width="3.2"/>
<circle cx="1113.6" cy="177.6" r="6.6" fill="#d9d9d9" stroke="#111" stroke-width="1.8"/>
<path d="M1109.6,176.6 a4.5,4.5 0 0 1 4,-3.6" stroke="#fff" stroke-width="1.4" fill="none"/>
<path d="M1103,187.7 l5,6 M1108,187.7 l-5,6" stroke="#000" stroke-width="1.2"/>
<text x="1109.5" y="194.7" font-size="10" fill="#000" font-weight="normal" text-anchor="start" textLength="6" lengthAdjust="spacingAndGlyphs" >1</text>
<line x1="1118.1" y1="220.6" x2="1125" y2="227.7" stroke="#000" stroke-width="3.2"/>
<circle cx="1113.6" cy="216.1" r="6.6" fill="#d9d9d9" stroke="#111" stroke-width="1.8"/>
<path d="M1109.6,215.1 a4.5,4.5 0 0 1 4,-3.6" stroke="#fff" stroke-width="1.4" fill="none"/>
<path d="M1103,226.2 l5,6 M1108,226.2 l-5,6" stroke="#000" stroke-width="1.2"/>
<text x="1109.5" y="233.2" font-size="10" fill="#000" font-weight="normal" text-anchor="start" textLength="6" lengthAdjust="spacingAndGlyphs" >4</text>
<line x1="1118.1" y1="259.1" x2="1125" y2="266.2" stroke="#000" stroke-width="3.2"/>
<circle cx="1113.6" cy="254.6" r="6.6" fill="#d9d9d9" stroke="#111" stroke-width="1.8"/>
<path d="M1109.6,253.6 a4.5,4.5 0 0 1 4,-3.6" stroke="#fff" stroke-width="1.4" fill="none"/>
<text x="1104" y="272.2" font-size="9.5" fill="#000" font-weight="bold" text-anchor="start" textLength="17" lengthAdjust="spacingAndGlyphs" >ALL</text>
<line x1="1118.1" y1="297.59999999999997" x2="1125" y2="304.7" stroke="#000" stroke-width="3.2"/>
<circle cx="1113.6" cy="293.09999999999997" r="6.6" fill="#d9d9d9" stroke="#111" stroke-width="1.8"/>
<path d="M1109.6,292.09999999999997 a4.5,4.5 0 0 1 4,-3.6" stroke="#fff" stroke-width="1.4" fill="none"/>
<ellipse cx="1114" cy="307.2" rx="8" ry="3.2" fill="#111"/>
<path d="M1107,307.2 l5,-2.5 l3,2.5 z" fill="#e01010"/><path d="M1112,309.2 l5,-3 l4,2 l-4,2 z" fill="#1030ff"/><path d="M1107,307.2 l5,2 l-1,0.8 z" fill="#10b010"/>
<rect x="1100" y="318" width="16" height="8" fill="#ffff80" stroke="#999" stroke-width="1"/><rect x="1118" y="318" width="16" height="8" fill="#ffff80" stroke="#999" stroke-width="1"/>
<path d="M1104,320 l4,3 h4 M1130,320 l-4,3 h-4" stroke="#000" stroke-width="1.5" fill="none"/>
<path d="M1472,19 L1490,34.7 M1490,19 L1472,34.7" stroke="#000" stroke-width="2.4"/>
<text x="1481.5" y="76.3" font-size="25" fill="#000" font-weight="bold" text-anchor="middle" >?</text>
<path d="M1469,98.8 l9,4.5 l-9,4.5 M1483,98.8 l9,4.5 l-9,4.5" fill="none" stroke="#000" stroke-width="2.6"/>
<path d="M1478,137.3 l-9,4.5 l9,4.5 M1492,137.3 l-9,4.5 l9,4.5" fill="none" stroke="#000" stroke-width="2.6"/>
<path d="M1471,247.8 h20 v9 q0,10 -10,14 q-10,-4 -10,-14 z" fill="#9a9a9a"/>
<path d="M1472,246.8 h17 v9 q0,9 -8.5,13 q-8.5,-4 -8.5,-13 z" fill="#c01818" stroke="#e8e8e8" stroke-width="1"/>
<path d="M1480.5,246.8 v22 M1472,254.8 h17" stroke="#dcdcdc" stroke-width="2"/>
<rect x="1474" y="292.3" width="18" height="14" fill="#fff" stroke="#000" stroke-width="1.5"/><rect x="1474" y="292.3" width="18" height="3" fill="#00008a"/>
<rect x="1468" y="285.3" width="18" height="14" fill="#fff" stroke="#000" stroke-width="1.5"/><rect x="1468" y="285.3" width="18" height="3" fill="#00008a"/>
<path d="M1468,292.3 h18 M1468,295.8 h18 M1474,288.3 v11 M1480,288.3 v11" stroke="#bbb" stroke-width="0.8"/>
<path d="M1474,300.3 h18 M1474,303.3 h18 M1480,299.3 v7 M1486,295.3 v11" stroke="#bbb" stroke-width="0.8"/>
<rect x="1263" y="125.5" width="76.5" height="76.5" fill="none" stroke="#e8e800" stroke-width="1.2"/>
<rect x="1248.5" y="117" width="18" height="19" fill="none" stroke="#10e010" stroke-width="1.2"/>
<rect x="1227.5" y="42" width="2.5" height="2.5" fill="#c86428"/>
<rect x="1385" y="56.5" width="2.5" height="2.5" fill="#c86428"/>
<rect x="1366" y="96.5" width="2.5" height="2.5" fill="#108010"/>
<rect x="1166" y="136.5" width="2.5" height="2.5" fill="#c86428"/>
<rect x="1171" y="140" width="2.5" height="2.5" fill="#c86428"/>
<rect x="1268" y="140" width="2.5" height="2.5" fill="#4aa0f0"/>
<rect x="1267" y="152" width="2.5" height="2.5" fill="#4aa0f0"/>
<rect x="1293.5" y="139" width="2.5" height="2.5" fill="#a0a0a0"/>
<rect x="1301" y="144" width="2.5" height="2.5" fill="#a0a0a0"/>
<rect x="1362" y="147.5" width="2.5" height="2.5" fill="#c86428"/>
<rect x="1328" y="172.5" width="2.5" height="2.5" fill="#108010"/>
<rect x="1344.5" y="183" width="2.5" height="2.5" fill="#5070c0"/>
<rect x="1351" y="181" width="2.5" height="2.5" fill="#5070c0"/>
<rect x="1351.5" y="179" width="2.5" height="2.5" fill="#c86428"/>
<rect x="1356" y="190" width="2.5" height="2.5" fill="#c86428"/>
<rect x="1352.5" y="237" width="2.5" height="2.5" fill="#c86428"/>
<rect x="1263.5" y="258" width="2.5" height="2.5" fill="#108010"/>
<rect x="1255" y="278" width="2.5" height="2.5" fill="#c86428"/>
<rect x="1192" y="281" width="2.5" height="2.5" fill="#108010"/>
<rect x="1259" y="124" width="2.5" height="2.5" fill="#a0a0a0"/>
<rect x="1250" y="124" width="2.5" height="2.5" fill="#4aa0f0"/>
</svg>
<div class="a" style="left:1502px;top:0px;width:149px;height:326px;background:linear-gradient(180deg,#282824 0px,#2e2e30 28px,#3e3e40 38px,#5a5a5a 48px,#686868 60px,#6e6e6e 100px,#737373 326px);"></div>
<div class="a" style="left:1099px;top:326px;width:552px;height:557px;background:#a090a4;"></div>
<div class="a" style="left:1102px;top:329px;width:544px;height:2px;background:#4a3a4c;"></div>
<div class="a" style="left:1649px;top:326px;width:2px;height:552px;background:#2c1c2e;"></div>
<div class="a" style="left:1099px;top:876px;width:552px;height:2px;background:#2c1c2e;"></div>
<div class="a" style="left:1102px;top:329px;width:2px;height:544px;background:#4a3a4c;"></div>
<div class="a" style="left:1104px;top:331px;width:542px;height:542px;background:#1b1b1b;"></div>
<svg width="542" height="542" style="left:1104px;top:331px;overflow:hidden">
<polyline points="269.6,0.0 267.0,14.3 256.7,20.7 250.2,33.7 248.9,40.2 233.3,53.2 220.4,66.1 215.2,71.3 197.0,83.0 186.7,93.3 178.9,99.8 165.9,105.0 155.6,112.8 153.0,119.3 140.0,128.3 129.6,138.7 121.9,145.2 114.1,153.0 111.5,160.7 103.7,163.3 88.2,169.8 83.0,177.6 72.6,185.4 70.0,193.2 60.9,200.9 62.2,207.4 51.9,215.2 41.5,219.1 38.9,228.2 25.9,235.9 13.0,242.4 0.0,251.5" fill="none" stroke="#ffffff" stroke-width="1.4" stroke-linejoin="round"/>
<polyline points="522.2,0.0 517.0,11.7 518.3,20.7 522.2,31.1 524.8,48.0 531.3,57.0 536.5,60.9 541.6,53.2" fill="none" stroke="#ffffff" stroke-width="1.4" stroke-linejoin="round"/>
<polyline points="541.6,102.4 531.3,97.2 524.8,89.5 517.0,97.2 505.3,95.9 504.0,101.1 500.2,110.2 506.6,121.9 511.8,129.6 514.4,145.2 514.4,162.0 506.6,178.9 505.3,199.6 500.2,207.4 487.2,212.6 482.0,219.1 485.9,228.2 487.2,239.8 489.8,246.3 484.6,252.8 474.2,259.3 463.9,258.0 453.5,255.4 443.1,256.7 430.2,250.2 421.1,243.7 413.3,247.6 409.4,254.1 417.2,263.2 425.0,269.8 417.2,275.0 412.0,280.1 402.9,286.6 399.0,285.3 393.9,291.8 375.7,295.7 373.1,303.5 370.5,317.7 375.7,326.8 386.1,334.6 393.9,342.4 396.5,350.2 393.9,357.9 387.4,367.0 384.8,373.5 386.1,381.3 396.5,385.2 406.8,380.0 414.6,373.5 419.8,365.7 427.6,360.5 437.9,356.6 453.5,360.5 466.5,357.9 471.6,355.3 465.2,351.4 448.3,343.7 437.9,335.9 427.6,334.6 417.2,329.4 406.8,321.6 406.8,312.6 413.3,304.8 422.4,300.9 435.3,300.9 443.1,303.5 449.6,308.7 453.5,313.9 457.4,319.0 463.9,313.9 476.8,307.4 489.8,300.9 500.2,298.3 513.1,295.7 520.9,298.3 531.3,303.5 541.6,308.7" fill="none" stroke="#ffffff" stroke-width="1.4" stroke-linejoin="round"/>
<polyline points="380.9,542.0 386.1,531.6 391.3,521.3 391.3,508.3 386.1,495.3 375.7,496.6 365.3,495.3 367.9,488.9 380.9,487.6 386.1,479.8 387.4,469.4 383.5,459.0 378.3,448.7 375.7,443.5 383.5,438.3 393.9,433.1 404.2,427.9 409.4,420.2 408.1,412.4 410.7,404.6 412.0,396.8 421.1,402.0 427.6,398.1 431.5,403.3 435.3,417.6 443.1,427.9 450.9,422.7 453.5,415.0 458.7,417.6 466.5,424.0 474.2,420.2 478.1,407.2 476.8,399.4 469.1,398.1 453.5,402.0 443.1,404.6 443.1,394.2 448.3,383.9 452.2,377.4 463.9,383.9 476.8,387.7 484.6,390.3 491.1,386.5 487.2,402.0 485.9,417.6 479.4,422.7 482.0,433.1 491.1,443.5 502.7,453.9 515.7,469.4 520.9,482.4 528.7,495.3 530.0,510.9 533.9,521.3 528.7,531.6 523.5,542.0" fill="none" stroke="#ffffff" stroke-width="1.4" stroke-linejoin="round"/>
<polyline points="0.4,14.6 4.9,15.7" fill="none" stroke="#ffffff" stroke-width="2.2" stroke-linejoin="round"/>
<polyline points="7.0,15.3 12.3,17.1" fill="none" stroke="#ffffff" stroke-width="2.2" stroke-linejoin="round"/>
<polyline points="14.5,17.5 21.9,17.1 30.0,13.4" fill="none" stroke="#ffffff" stroke-width="2.2" stroke-linejoin="round"/>
<polyline points="35.3,16.0 43.4,16.8" fill="none" stroke="#ffffff" stroke-width="2.2" stroke-linejoin="round"/>
<polyline points="47.9,18.3 58.2,12.3 59.0,7.9 64.9,3.4" fill="none" stroke="#ffffff" stroke-width="2.2" stroke-linejoin="round"/>
<polyline points="68.6,5.7 76.0,3.8" fill="none" stroke="#ffffff" stroke-width="2.2" stroke-linejoin="round"/>
<polyline points="79.0,5.5 80.0,6.5" fill="none" stroke="#ffffff" stroke-width="2.2" stroke-linejoin="round"/>
<polyline points="23.4,64.2 43.4,53.8 47.9,53.8" fill="none" stroke="#ffffff" stroke-width="2.2" stroke-linejoin="round"/>
<polyline points="46.4,55.3 47.9,60.5 45.6,62.0" fill="none" stroke="#ffffff" stroke-width="2.2" stroke-linejoin="round"/>
<polyline points="44.9,65.7 46.4,70.9" fill="none" stroke="#ffffff" stroke-width="2.2" stroke-linejoin="round"/>
<polyline points="52.3,73.8 56.0,70.1 61.2,73.1 60.4,76.0" fill="none" stroke="#ffffff" stroke-width="2.2" stroke-linejoin="round"/>
<ellipse cx="4.1" cy="62.0" rx="1.8" ry="1.8" fill="none" stroke="#fff" stroke-width="1.5"/>
<ellipse cx="474.2" cy="36.3" rx="1.5" ry="2.2" fill="none" stroke="#fff" stroke-width="1.5"/>
<ellipse cx="460.0" cy="101.0" rx="2" ry="5" fill="none" stroke="#fff" stroke-width="1.5"/>
<ellipse cx="475.5" cy="114.0" rx="6" ry="4.5" fill="none" stroke="#fff" stroke-width="1.5"/>
<ellipse cx="348.5" cy="332.0" rx="4.5" ry="6" fill="none" stroke="#fff" stroke-width="1.5"/>
<ellipse cx="448.3" cy="299.6" rx="4.5" ry="2.6" fill="none" stroke="#fff" stroke-width="1.5"/>
<ellipse cx="480.7" cy="288.0" rx="5.5" ry="3.5" fill="none" stroke="#fff" stroke-width="1.5"/>
<ellipse cx="469.0" cy="279.0" rx="1.6" ry="2" fill="none" stroke="#fff" stroke-width="1.5"/>
<ellipse cx="508.0" cy="277.6" rx="1.8" ry="2" fill="none" stroke="#fff" stroke-width="1.5"/>
<ellipse cx="535.0" cy="285.0" rx="2" ry="2" fill="none" stroke="#fff" stroke-width="1.5"/>
<ellipse cx="536.5" cy="269.8" rx="2.5" ry="1.8" fill="none" stroke="#fff" stroke-width="1.5"/>
<ellipse cx="435.3" cy="343.7" rx="2" ry="3" fill="none" stroke="#fff" stroke-width="1.5"/>
<ellipse cx="471.6" cy="307.4" rx="1.6" ry="1.6" fill="none" stroke="#fff" stroke-width="1.5"/>
<ellipse cx="456.0" cy="319.0" rx="2" ry="1.6" fill="none" stroke="#fff" stroke-width="1.5"/>
<ellipse cx="465.2" cy="391.6" rx="1.6" ry="1.6" fill="none" stroke="#fff" stroke-width="1.5"/>
<ellipse cx="462.5" cy="432.0" rx="1.6" ry="1.6" fill="none" stroke="#fff" stroke-width="1.5"/>
<ellipse cx="402.9" cy="448.7" rx="2" ry="1.5" fill="none" stroke="#fff" stroke-width="1.5"/>
<ellipse cx="414.6" cy="433.0" rx="1.5" ry="1.5" fill="none" stroke="#fff" stroke-width="1.5"/>
<ellipse cx="413.3" cy="414.0" rx="2" ry="2" fill="none" stroke="#fff" stroke-width="1.5"/>
<ellipse cx="449.6" cy="453.9" rx="4.5" ry="3.5" fill="none" stroke="#fff" stroke-width="1.5"/>
<ellipse cx="430.2" cy="483.7" rx="1.8" ry="1.6" fill="none" stroke="#fff" stroke-width="1.5"/>
<ellipse cx="408.1" cy="492.7" rx="1.6" ry="1.6" fill="none" stroke="#fff" stroke-width="1.5"/>
<ellipse cx="432.7" cy="507.0" rx="3.5" ry="3" fill="none" stroke="#fff" stroke-width="1.5"/>
<ellipse cx="482.0" cy="500.5" rx="3.5" ry="2.8" fill="none" stroke="#fff" stroke-width="1.5"/>
<ellipse cx="469.0" cy="504.4" rx="1.5" ry="1.2" fill="none" stroke="#fff" stroke-width="1.5"/>
<ellipse cx="460.0" cy="509.6" rx="2.5" ry="1.2" fill="none" stroke="#fff" stroke-width="1.5"/>
<ellipse cx="435.3" cy="513.5" rx="1.6" ry="1.3" fill="none" stroke="#fff" stroke-width="1.5"/>
<ellipse cx="448.3" cy="536.8" rx="1.5" ry="1.5" fill="none" stroke="#fff" stroke-width="1.5"/>
<ellipse cx="482.0" cy="536.8" rx="1.5" ry="1.5" fill="none" stroke="#fff" stroke-width="1.5"/>
<ellipse cx="531.0" cy="526.5" rx="2.5" ry="3" fill="none" stroke="#fff" stroke-width="1.5"/>
<ellipse cx="515.7" cy="223.0" rx="1.5" ry="1.5" fill="none" stroke="#fff" stroke-width="1.5"/>
<ellipse cx="501.5" cy="236.0" rx="1.5" ry="2" fill="none" stroke="#fff" stroke-width="1.5"/>
<ellipse cx="521.0" cy="239.5" rx="2" ry="4.5" fill="none" stroke="#fff" stroke-width="1.5"/>
<ellipse cx="536.5" cy="203.5" rx="1.6" ry="1.6" fill="none" stroke="#fff" stroke-width="1.5"/>
<ellipse cx="531.3" cy="255.4" rx="1.8" ry="1.5" fill="none" stroke="#fff" stroke-width="1.5"/>
<ellipse cx="537.8" cy="269.6" rx="2.5" ry="2" fill="none" stroke="#fff" stroke-width="1.5"/>
<ellipse cx="508.0" cy="276.0" rx="1.5" ry="1.5" fill="none" stroke="#fff" stroke-width="1.5"/>
<ellipse cx="489.8" cy="259.3" rx="2" ry="1.5" fill="none" stroke="#fff" stroke-width="1.5"/>
<ellipse cx="340.2" cy="378.7" rx="2" ry="0.6" fill="none" stroke="#fff" stroke-width="1.5"/>
<ellipse cx="480.7" cy="168.5" rx="1" ry="0.5" fill="none" stroke="#fff" stroke-width="1.5"/>
<ellipse cx="488.5" cy="168.0" rx="1" ry="0.5" fill="none" stroke="#fff" stroke-width="1.5"/>
<ellipse cx="541.0" cy="176.0" rx="1.5" ry="3" fill="none" stroke="#fff" stroke-width="1.5"/>
<rect x="150.4000000000001" y="201" width="270.5999999999999" height="270" fill="none" stroke="#f0f000" stroke-width="1.6"/>
<rect x="101.09999999999991" y="173.2" width="66.60000000000014" height="66.59999999999997" fill="none" stroke="#10e010" stroke-width="1.6"/>
<rect x="112.2" y="199.2" width="3.5" height="3.5" fill="#4aa0f0"/>
<rect x="115.5" y="199.5" width="3" height="3" fill="#4aa0f0"/>
<rect x="105.6" y="203.0" width="2" height="2" fill="#999"/>
<rect x="135.6" y="182.5" width="2" height="2" fill="#999"/>
<rect x="139.0" y="186.0" width="2" height="2" fill="#999"/>
<rect x="146.0" y="192.0" width="2" height="2" fill="#999"/>
<rect x="174.0" y="258.6" width="4" height="4" fill="#4aa0f0"/>
<rect x="263.0" y="255.0" width="2" height="2" fill="#999"/>
<rect x="289.0" y="271.0" width="2" height="2" fill="#999"/>
<rect x="439.8" y="411.7" width="4" height="4" fill="#4a70c0"/>
<rect x="449.4" y="407.0" width="3" height="3" fill="#4a70c0"/>
<rect x="469.3" y="394.5" width="2" height="2" fill="#d06040"/>
<rect x="483.6" y="432.0" width="2" height="2" fill="#108010"/>
<rect x="509.2" y="26.2" width="1.5" height="1.5" fill="#108010"/>
<path d="M167,300.4 h8 M171,296.4 v8" stroke="#4aa0f0" stroke-width="2.2"/>
</svg>
<div class="a" style="left:1651px;top:0px;width:269px;height:878px;background:#a090a4;"></div>
<div class="a" style="left:1654px;top:3px;width:2px;height:873px;background:#4a3a4c;"></div>
<div class="a" style="left:1654px;top:3px;width:264px;height:2px;background:#4a3a4c;"></div>
<div class="a" style="left:1918px;top:0px;width:2px;height:878px;background:#2c1c2e;"></div>
<div class="a" style="left:1651px;top:876px;width:269px;height:2px;background:#2c1c2e;"></div>
<div class="a" style="left:1656px;top:5px;width:259px;height:868px;background:#f0f0f0;"></div>
<div class="a" style="left:1656px;top:29px;width:259px;height:831px;background:#ffffff;border-top:2px solid #7a7a7a;border-left:2px solid #c0c0c0"></div>
<svg width="256" height="830" style="left:1658px;top:30px">
<line x1="10.5" y1="17.5" x2="10.5" y2="279.3" stroke="#777" stroke-width="1" stroke-dasharray="1,2"/>
<line x1="10.5" y1="307.5" x2="10.5" y2="336.9" stroke="#777" stroke-width="1" stroke-dasharray="1,2"/>
<line x1="10.5" y1="365.09999999999997" x2="10.5" y2="394.5" stroke="#777" stroke-width="1" stroke-dasharray="1,2"/>
<line x1="10.5" y1="422.7" x2="10.5" y2="490.5" stroke="#777" stroke-width="1" stroke-dasharray="1,2"/>
<line x1="10.5" y1="518.7" x2="10.5" y2="528.9" stroke="#777" stroke-width="1" stroke-dasharray="1,2"/>
<line x1="10.5" y1="557.1" x2="10.5" y2="567.3" stroke="#777" stroke-width="1" stroke-dasharray="1,2"/>
<path d="M2,6.5 L8,14.5 L18,3.5" fill="none" stroke="#000" stroke-width="3.2" stroke-linejoin="round"/>
<rect x="5.5" y="25.400000000000006" width="10.5" height="10.5" fill="#fff" stroke="#8a8a8a" stroke-width="1.2"/>
<path d="M7.599999999999909,30.700000000000003 h6.5 M10.799999999999955,27.400000000000006 v6.5" stroke="#000" stroke-width="1.3"/>
<line x1="17" y1="29.700000000000003" x2="24" y2="29.700000000000003" stroke="#777" stroke-width="1" stroke-dasharray="1,2"/>
<rect x="24.5" y="20.1" width="2.8" height="19.2" fill="#000"/>
<rect x="27" y="21.5" width="13.5" height="9.6" fill="#0000ff" stroke="#000" stroke-width="1.6"/>
<rect x="5.5" y="44.60000000000001" width="10.5" height="10.5" fill="#fff" stroke="#8a8a8a" stroke-width="1.2"/>
<path d="M7.599999999999909,49.900000000000006 h6.5 M10.799999999999955,46.60000000000001 v6.5" stroke="#000" stroke-width="1.3"/>
<line x1="17" y1="48.900000000000006" x2="24" y2="48.900000000000006" stroke="#777" stroke-width="1" stroke-dasharray="1,2"/>
<rect x="24.5" y="39.30000000000001" width="2.8" height="19.2" fill="#000"/>
<rect x="27" y="40.7" width="13.5" height="9.6" fill="#0000ff" stroke="#000" stroke-width="1.6"/>
<rect x="5.5" y="63.8" width="10.5" height="10.5" fill="#fff" stroke="#8a8a8a" stroke-width="1.2"/>
<path d="M7.599999999999909,69.1 h6.5 M10.799999999999955,65.8 v6.5" stroke="#000" stroke-width="1.3"/>
<line x1="17" y1="68.1" x2="24" y2="68.1" stroke="#777" stroke-width="1" stroke-dasharray="1,2"/>
<rect x="24.5" y="58.5" width="2.8" height="19.2" fill="#000"/>
<rect x="27" y="59.89999999999999" width="13.5" height="9.6" fill="#0000ff" stroke="#000" stroke-width="1.6"/>
<rect x="5.5" y="83.0" width="10.5" height="10.5" fill="#fff" stroke="#8a8a8a" stroke-width="1.2"/>
<path d="M7.599999999999909,88.3 h6.5 M10.799999999999955,85.0 v6.5" stroke="#000" stroke-width="1.3"/>
<line x1="17" y1="87.3" x2="24" y2="87.3" stroke="#777" stroke-width="1" stroke-dasharray="1,2"/>
<rect x="24.5" y="77.7" width="2.8" height="19.2" fill="#000"/>
<rect x="27" y="79.1" width="13.5" height="9.6" fill="#0000ff" stroke="#000" stroke-width="1.6"/>
<rect x="5.5" y="102.19999999999999" width="10.5" height="10.5" fill="#fff" stroke="#8a8a8a" stroke-width="1.2"/>
<path d="M7.599999999999909,107.5 h6.5 M10.799999999999955,104.19999999999999 v6.5" stroke="#000" stroke-width="1.3"/>
<line x1="17" y1="106.5" x2="24" y2="106.5" stroke="#777" stroke-width="1" stroke-dasharray="1,2"/>
<rect x="24.5" y="96.9" width="2.8" height="19.2" fill="#000"/>
<rect x="27" y="98.30000000000001" width="13.5" height="9.6" fill="#0000ff" stroke="#000" stroke-width="1.6"/>
<rect x="5.5" y="121.39999999999998" width="10.5" height="10.5" fill="#fff" stroke="#8a8a8a" stroke-width="1.2"/>
<path d="M7.599999999999909,126.69999999999999 h6.5 M10.799999999999955,123.39999999999998 v6.5" stroke="#000" stroke-width="1.3"/>
<line x1="17" y1="125.69999999999999" x2="24" y2="125.69999999999999" stroke="#777" stroke-width="1" stroke-dasharray="1,2"/>
<rect x="24.5" y="116.1" width="2.8" height="19.2" fill="#000"/>
<rect x="27" y="117.5" width="13.5" height="9.6" fill="#0000ff" stroke="#000" stroke-width="1.6"/>
<rect x="5.5" y="140.6" width="10.5" height="10.5" fill="#fff" stroke="#8a8a8a" stroke-width="1.2"/>
<path d="M7.599999999999909,145.9 h6.5 M10.799999999999955,142.6 v6.5" stroke="#000" stroke-width="1.3"/>
<line x1="17" y1="144.9" x2="24" y2="144.9" stroke="#777" stroke-width="1" stroke-dasharray="1,2"/>
<rect x="24.5" y="135.3" width="2.8" height="19.2" fill="#000"/>
<rect x="27" y="136.70000000000002" width="13.5" height="9.6" fill="#0000ff" stroke="#000" stroke-width="1.6"/>
<rect x="5.5" y="159.79999999999998" width="10.5" height="10.5" fill="#fff" stroke="#8a8a8a" stroke-width="1.2"/>
<path d="M7.599999999999909,165.1 h6.5 M10.799999999999955,161.79999999999998 v6.5" stroke="#000" stroke-width="1.3"/>
<line x1="17" y1="164.1" x2="24" y2="164.1" stroke="#777" stroke-width="1" stroke-dasharray="1,2"/>
<rect x="24.5" y="154.5" width="2.8" height="19.2" fill="#000"/>
<rect x="27" y="155.9" width="13.5" height="9.6" fill="#0000ff" stroke="#000" stroke-width="1.6"/>
<rect x="5.5" y="178.99999999999997" width="10.5" height="10.5" fill="#fff" stroke="#8a8a8a" stroke-width="1.2"/>
<path d="M7.599999999999909,184.29999999999998 h6.5 M10.799999999999955,180.99999999999997 v6.5" stroke="#000" stroke-width="1.3"/>
<line x1="17" y1="183.29999999999998" x2="24" y2="183.29999999999998" stroke="#777" stroke-width="1" stroke-dasharray="1,2"/>
<rect x="24.5" y="173.7" width="2.8" height="19.2" fill="#000"/>
<rect x="27" y="175.1" width="13.5" height="9.6" fill="#0000ff" stroke="#000" stroke-width="1.6"/>
<rect x="5.5" y="198.2" width="10.5" height="10.5" fill="#fff" stroke="#8a8a8a" stroke-width="1.2"/>
<path d="M7.599999999999909,203.5 h6.5 M10.799999999999955,200.2 v6.5" stroke="#000" stroke-width="1.3"/>
<line x1="17" y1="202.5" x2="24" y2="202.5" stroke="#777" stroke-width="1" stroke-dasharray="1,2"/>
<rect x="24.5" y="192.9" width="2.8" height="19.2" fill="#000"/>
<rect x="27" y="194.3" width="13.5" height="9.6" fill="#0000ff" stroke="#000" stroke-width="1.6"/>
<rect x="5.5" y="217.39999999999998" width="10.5" height="10.5" fill="#fff" stroke="#8a8a8a" stroke-width="1.2"/>
<path d="M7.599999999999909,222.7 h6.5 M10.799999999999955,219.39999999999998 v6.5" stroke="#000" stroke-width="1.3"/>
<line x1="17" y1="221.7" x2="24" y2="221.7" stroke="#777" stroke-width="1" stroke-dasharray="1,2"/>
<rect x="24.5" y="212.1" width="2.8" height="19.2" fill="#000"/>
<rect x="27" y="213.5" width="13.5" height="9.6" fill="#0000ff" stroke="#000" stroke-width="1.6"/>
<rect x="5.5" y="236.59999999999997" width="10.5" height="10.5" fill="#fff" stroke="#8a8a8a" stroke-width="1.2"/>
<path d="M7.599999999999909,241.89999999999998 h6.5 M10.799999999999955,238.59999999999997 v6.5" stroke="#000" stroke-width="1.3"/>
<line x1="17" y1="240.89999999999998" x2="24" y2="240.89999999999998" stroke="#777" stroke-width="1" stroke-dasharray="1,2"/>
<rect x="24.5" y="231.29999999999995" width="2.8" height="19.2" fill="#000"/>
<rect x="27" y="232.7" width="13.5" height="9.6" fill="#0000ff" stroke="#000" stroke-width="1.6"/>
<rect x="5.5" y="255.8" width="10.5" height="10.5" fill="#fff" stroke="#8a8a8a" stroke-width="1.2"/>
<path d="M7.599999999999909,261.1 h6.5 M10.799999999999955,257.8 v6.5" stroke="#000" stroke-width="1.3"/>
<line x1="17" y1="260.1" x2="24" y2="260.1" stroke="#777" stroke-width="1" stroke-dasharray="1,2"/>
<rect x="24.5" y="250.5" width="2.8" height="19.2" fill="#000"/>
<rect x="27" y="251.90000000000003" width="13.5" height="9.6" fill="#0000ff" stroke="#000" stroke-width="1.6"/>
<rect x="5.5" y="275.0" width="10.5" height="10.5" fill="#fff" stroke="#8a8a8a" stroke-width="1.2"/>
<path d="M7.599999999999909,280.3 h6.5 M10.799999999999955,277.0 v6.5" stroke="#000" stroke-width="1.3"/>
<line x1="17" y1="279.3" x2="24" y2="279.3" stroke="#777" stroke-width="1" stroke-dasharray="1,2"/>
<rect x="24.5" y="269.7" width="2.8" height="19.2" fill="#000"/>
<rect x="27" y="271.1" width="13.5" height="9.6" fill="#0000ff" stroke="#000" stroke-width="1.6"/>
<rect x="2" y="289.5" width="2.8" height="19" fill="#000"/>
<rect x="4.5" y="290.5" width="13" height="10" fill="#8a8a8a" stroke="#000" stroke-width="1.6"/>
<rect x="5.5" y="313.4" width="10.5" height="10.5" fill="#fff" stroke="#8a8a8a" stroke-width="1.2"/>
<path d="M7.599999999999909,318.7 h6.5 M10.799999999999955,315.4 v6.5" stroke="#000" stroke-width="1.3"/>
<line x1="17" y1="317.7" x2="24" y2="317.7" stroke="#777" stroke-width="1" stroke-dasharray="1,2"/>
<rect x="24.5" y="308.09999999999997" width="2.8" height="19.2" fill="#000"/>
<rect x="27" y="309.5" width="13.5" height="9.6" fill="#8a8a8a" stroke="#000" stroke-width="1.6"/>
<rect x="5.5" y="332.59999999999997" width="10.5" height="10.5" fill="#fff" stroke="#8a8a8a" stroke-width="1.2"/>
<path d="M7.599999999999909,337.9 h6.5 M10.799999999999955,334.59999999999997 v6.5" stroke="#000" stroke-width="1.3"/>
<line x1="17" y1="336.9" x2="24" y2="336.9" stroke="#777" stroke-width="1" stroke-dasharray="1,2"/>
<rect x="24.5" y="327.29999999999995" width="2.8" height="19.2" fill="#000"/>
<rect x="27" y="328.7" width="13.5" height="9.6" fill="#8a8a8a" stroke="#000" stroke-width="1.6"/>
<rect x="2" y="347.09999999999997" width="2.8" height="19" fill="#000"/>
<rect x="4.5" y="348.09999999999997" width="13" height="10" fill="#118811" stroke="#000" stroke-width="1.6"/>
<rect x="5.5" y="371.0" width="10.5" height="10.5" fill="#fff" stroke="#8a8a8a" stroke-width="1.2"/>
<path d="M7.599999999999909,376.3 h6.5 M10.799999999999955,373.0 v6.5" stroke="#000" stroke-width="1.3"/>
<line x1="17" y1="375.3" x2="24" y2="375.3" stroke="#777" stroke-width="1" stroke-dasharray="1,2"/>
<rect x="24.5" y="365.7" width="2.8" height="19.2" fill="#000"/>
<rect x="27" y="367.1" width="13.5" height="9.6" fill="#118811" stroke="#000" stroke-width="1.6"/>
<rect x="5.5" y="390.2" width="10.5" height="10.5" fill="#fff" stroke="#8a8a8a" stroke-width="1.2"/>
<path d="M7.599999999999909,395.5 h6.5 M10.799999999999955,392.2 v6.5" stroke="#000" stroke-width="1.3"/>
<line x1="17" y1="394.5" x2="24" y2="394.5" stroke="#777" stroke-width="1" stroke-dasharray="1,2"/>
<rect x="24.5" y="384.9" width="2.8" height="19.2" fill="#000"/>
<rect x="27" y="386.3" width="13.5" height="9.6" fill="#118811" stroke="#000" stroke-width="1.6"/>
<polygon points="18.7,417.4 13.5,422.6 6.1,422.6 0.9,417.4 0.9,410.0 6.1,404.8 13.5,404.8 18.7,410.0" fill="#fff" stroke="#222" stroke-width="1.6"/>
<line x1="11" y1="432.9" x2="23" y2="432.9" stroke="#777" stroke-width="1" stroke-dasharray="1,2"/>
<polygon points="41.2,436.5 36.1,441.6 28.9,441.6 23.8,436.5 23.8,429.3 28.9,424.2 36.1,424.2 41.2,429.3" fill="#fff" stroke="#222" stroke-width="1.6"/>
<path d="M32.5,425.9 v13 M27,433.9 l5.5,-5 l5.5,5 M30,437.4 l2.5,2 l2.5,-2" fill="none" stroke="#0000ff" stroke-width="2.2"/>
<line x1="11" y1="452.09999999999997" x2="23" y2="452.09999999999997" stroke="#777" stroke-width="1" stroke-dasharray="1,2"/>
<polygon points="41.2,455.7 36.1,460.8 28.9,460.8 23.8,455.7 23.8,448.5 28.9,443.4 36.1,443.4 41.2,448.5" fill="#fff" stroke="#222" stroke-width="1.6"/>
<path d="M32.5,445.09999999999997 v13 M27,453.09999999999997 l5.5,-5 l5.5,5 M30,456.59999999999997 l2.5,2 l2.5,-2" fill="none" stroke="#0000ff" stroke-width="2.2"/>
<line x1="11" y1="471.29999999999995" x2="23" y2="471.29999999999995" stroke="#777" stroke-width="1" stroke-dasharray="1,2"/>
<polygon points="41.2,474.9 36.1,480.0 28.9,480.0 23.8,474.9 23.8,467.7 28.9,462.6 36.1,462.6 41.2,467.7" fill="#fff" stroke="#222" stroke-width="1.6"/>
<path d="M32.5,464.29999999999995 v13 M27,472.29999999999995 l5.5,-5 l5.5,5 M30,475.79999999999995 l2.5,2 l2.5,-2" fill="none" stroke="#0000ff" stroke-width="2.2"/>
<line x1="11" y1="490.5" x2="23" y2="490.5" stroke="#777" stroke-width="1" stroke-dasharray="1,2"/>
<polygon points="41.2,494.1 36.1,499.2 28.9,499.2 23.8,494.1 23.8,486.9 28.9,481.8 36.1,481.8 41.2,486.9" fill="#fff" stroke="#222" stroke-width="1.6"/>
<path d="M32.5,483.5 v13 M27,491.5 l5.5,-5 l5.5,5 M30,495.0 l2.5,2 l2.5,-2" fill="none" stroke="#0000ff" stroke-width="2.2"/>
<polygon points="18.7,513.4 13.5,518.6 6.1,518.6 0.9,513.4 0.9,506.0 6.1,500.8 13.5,500.8 18.7,506.0" fill="#fff" stroke="#222" stroke-width="1.6"/>
<line x1="11" y1="528.9" x2="23" y2="528.9" stroke="#777" stroke-width="1" stroke-dasharray="1,2"/>
<polygon points="40.8,532.3 35.9,537.2 29.1,537.2 24.2,532.3 24.2,525.5 29.1,520.6 35.9,520.6 40.8,525.5" fill="#3d7a8a" stroke="#111" stroke-width="1.6"/>
<path d="M32.5,522.9 v11 M28,527.9 q0,6 4.5,6 q4.5,0 4.5,-6" fill="none" stroke="#000" stroke-width="1.8"/>
<polygon points="18.7,551.8 13.5,557.0 6.1,557.0 0.9,551.8 0.9,544.4 6.1,539.2 13.5,539.2 18.7,544.4" fill="#fff" stroke="#222" stroke-width="1.6"/>
<rect x="5.5" y="563.0" width="10.5" height="10.5" fill="#fff" stroke="#8a8a8a" stroke-width="1.2"/>
<path d="M7.599999999999909,568.3 h6.5 M10.799999999999955,565.0 v6.5" stroke="#000" stroke-width="1.3"/>
<line x1="17" y1="567.3" x2="23" y2="567.3" stroke="#777" stroke-width="1" stroke-dasharray="1,2"/>
<polygon points="41.0,570.8 36.0,575.8 29.0,575.8 24.0,570.8 24.0,563.8 29.0,558.8 36.0,558.8 41.0,563.8" fill="#0f8a1a" stroke="#111" stroke-width="1.6"/>
<path d="M26.5,566.3 l6,-4 l6,4 z M28,568.3 h9 v3 h-9 z" fill="#0f8a1a" stroke="#111" stroke-width="1.3"/>
<polygon points="18.7,590.2 13.5,595.4 6.1,595.4 0.9,590.2 0.9,582.8 6.1,577.6 13.5,577.6 18.7,582.8" fill="#fff" stroke="#222" stroke-width="1.6"/>
</svg>
<div class="a" style="left:1099px;top:878px;width:821px;height:202px;background:#a090a4;"></div>
<div class="a" style="left:1102px;top:881px;width:818px;height:2px;background:#4a3a4c;"></div>
<div class="a" style="left:1102px;top:881px;width:2px;height:197px;background:#4a3a4c;"></div>
<div class="a" style="left:1918px;top:878px;width:2px;height:202px;background:#2c1c2e;"></div>
<div class="a" style="left:1099px;top:1077px;width:821px;height:3px;background:#2c1c2e;"></div>
<div class="a" style="left:1104px;top:883px;width:49px;height:192px;background:linear-gradient(90deg,#4a4a50 0px,#6e6e70 3px,#8a8a8a 8px,#7e7e7e 20px,#7a7a7a 49px);"></div>
<div class="a" style="left:1152px;top:883px;width:763px;height:192px;background:#ffffff;border-top:3px solid #8a8a8a;border-left:3px solid #9a9a9a"></div>
<svg width="60" height="90" style="left:1100px;top:880px">
<g stroke="#000" stroke-width="2.6">
<circle cx="28" cy="17" r="9.2" fill="#f4ec00"/><circle cx="18.5" cy="27" r="9.2" fill="#f4ec00"/><circle cx="37.5" cy="27" r="9.2" fill="#f4ec00"/><circle cx="28" cy="36" r="9.2" fill="#f4ec00"/>
</g>
<g fill="#f4ec00"><circle cx="28" cy="17" r="7.9"/><circle cx="18.5" cy="27" r="7.9"/><circle cx="37.5" cy="27" r="7.9"/><circle cx="28" cy="36" r="7.9"/><rect x="19" y="18" width="18" height="18"/></g>
<path d="M16,19 L27,28 L28,23 L40,34" fill="none" stroke="#000" stroke-width="2"/>
<rect x="19.5" y="66.5" width="17" height="15" fill="#bdbdbd" stroke="#333" stroke-width="1.2"/>
<rect x="22" y="69" width="12" height="10" fill="#0a8a1a"/>
<path d="M23,75 l3,-2 l3,2 l3,-3" stroke="#50e060" stroke-width="1" fill="none"/>
</svg>
<div class="a" style="left:1657px;top:860px;width:257px;height:14px;background:#f0f0f0;"></div>
<div class="a" style="left:1657px;top:860px;width:28px;height:13px;background:#c8c8c8;border-right:1px solid #888;border-bottom:1px solid #888"></div>
<div class="a" style="left:1686px;top:860px;width:29px;height:13px;background:#c8c8c8;border-right:1px solid #888;border-bottom:1px solid #888"></div>
<svg width="80" height="20" style="left:1650px;top:858px"><path d="M13,11 l7,-5 l7,5 M43,7 l7,5 l7,-5" fill="none" stroke="#777" stroke-width="2"/></svg>
<div class="a" style="left:1656px;top:5px;width:47px;height:23px;background:#f0f0f0;border-right:2px solid #8a8a8a;border-bottom:2px solid #8a8a8a"></div>
<div class="a" style="left:1880px;top:5px;width:34px;height:23px;background:#ffffff;"></div>
<div class="a" style="left:1890px;top:10px;width:14px;height:14px;border-radius:50%;background:#ee1c0c"></div>
<svg width="1920" height="1080" style="left:0;top:0">
<text x="205.8" y="1072.3" font-size="13.5" fill="#111" font-weight="normal" text-anchor="start" textLength="55" lengthAdjust="spacingAndGlyphs" >20km (x8)</text>
<text x="14" y="1042.6" font-size="13" fill="#000" font-weight="normal" text-anchor="start" textLength="82" lengthAdjust="spacingAndGlyphs" >Select objects.</text>
<text x="392" y="1048.8" font-size="13" fill="#222" font-weight="normal" text-anchor="start" textLength="30" lengthAdjust="spacingAndGlyphs" >Me :</text>
<text x="392" y="1066" font-size="13" fill="#222" font-weight="normal" text-anchor="start" textLength="30" lengthAdjust="spacingAndGlyphs" >You:</text>
<text x="934" y="14.2" font-size="13" fill="#000" font-weight="normal" text-anchor="start" textLength="117" lengthAdjust="spacingAndGlyphs" >2019-01-16 10:17:56</text>
<text x="934" y="26.5" font-size="13" fill="#000" font-weight="normal" text-anchor="start" textLength="69" lengthAdjust="spacingAndGlyphs" >mt=0 et=300</text>
<text x="1683" y="45.5" font-size="13.3" fill="#000" font-weight="normal" text-anchor="start" stroke="#000" stroke-width="0.12">Air Force</text>
<text x="1706" y="64.7" font-size="13.3" fill="#000" font-weight="normal" text-anchor="start" stroke="#000" stroke-width="0.12">Fleet Squadron 1</text>
<text x="1706" y="83.9" font-size="13.3" fill="#000" font-weight="normal" text-anchor="start" stroke="#000" stroke-width="0.12">Fleet Squadron 7</text>
<text x="1706" y="103.1" font-size="13.3" fill="#000" font-weight="normal" text-anchor="start" stroke="#000" stroke-width="0.12">Fleet Squadron 2</text>
<text x="1706" y="122.3" font-size="13.3" fill="#000" font-weight="normal" text-anchor="start" stroke="#000" stroke-width="0.12">Fleet Squadron 4</text>
<text x="1706" y="141.5" font-size="13.3" fill="#000" font-weight="normal" text-anchor="start" stroke="#000" stroke-width="0.12">Fleet Squadron 3</text>
<text x="1706" y="160.7" font-size="13.3" fill="#000" font-weight="normal" text-anchor="start" stroke="#000" stroke-width="0.12">Northern Airwarning Wing</text>
<text x="1706" y="179.9" font-size="13.3" fill="#000" font-weight="normal" text-anchor="start" stroke="#000" stroke-width="0.12">Central Airwarning Wing</text>
<text x="1706" y="199.1" font-size="13.3" fill="#000" font-weight="normal" text-anchor="start" stroke="#000" stroke-width="0.12">201 Fighter Squadron</text>
<text x="1706" y="218.3" font-size="13.3" fill="#000" font-weight="normal" text-anchor="start" stroke="#000" stroke-width="0.12">203 Fighter Squadron</text>
<text x="1706" y="237.5" font-size="13.3" fill="#000" font-weight="normal" text-anchor="start" stroke="#000" stroke-width="0.12">3 Fighter Squadron</text>
<text x="1706" y="256.7" font-size="13.3" fill="#000" font-weight="normal" text-anchor="start" stroke="#000" stroke-width="0.12">8 Fighter Squadron</text>
<text x="1706" y="275.9" font-size="13.3" fill="#000" font-weight="normal" text-anchor="start" stroke="#000" stroke-width="0.12">21 Fighter Squadron</text>
<text x="1706" y="295.1" font-size="13.3" fill="#000" font-weight="normal" text-anchor="start" stroke="#000" stroke-width="0.12">303 Fighter Squadron</text>
<text x="1706" y="314.3" font-size="13.3" fill="#000" font-weight="normal" text-anchor="start" stroke="#000" stroke-width="0.12">306 Fighter Squadron</text>
<text x="1683" y="333.5" font-size="13.3" fill="#000" font-weight="normal" text-anchor="start" stroke="#000" stroke-width="0.12">Navy</text>
<text x="1706" y="352.7" font-size="13.3" fill="#000" font-weight="normal" text-anchor="start" stroke="#000" stroke-width="0.12">Escort Flottila 1</text>
<text x="1706" y="371.9" font-size="13.3" fill="#000" font-weight="normal" text-anchor="start" stroke="#000" stroke-width="0.12">Escort Flottila 4</text>
<text x="1683" y="391.1" font-size="13.3" fill="#000" font-weight="normal" text-anchor="start" stroke="#000" stroke-width="0.12">Land Force</text>
<text x="1706" y="410.3" font-size="13.3" fill="#000" font-weight="normal" text-anchor="start" stroke="#000" stroke-width="0.12">3 Air Defense Group</text>
<text x="1706" y="429.5" font-size="13.3" fill="#000" font-weight="normal" text-anchor="start" stroke="#000" stroke-width="0.12">6 Air Defense Group</text>
<text x="1683" y="448.7" font-size="13.3" fill="#000" font-weight="normal" text-anchor="start" stroke="#000" stroke-width="0.12">Air Base</text>
<text x="1706" y="467.9" font-size="13.3" fill="#000" font-weight="normal" text-anchor="start" stroke="#000" stroke-width="0.12">Airbase1</text>
<text x="1706" y="487.1" font-size="13.3" fill="#000" font-weight="normal" text-anchor="start" stroke="#000" stroke-width="0.12">Airbase2</text>
<text x="1706" y="506.3" font-size="13.3" fill="#000" font-weight="normal" text-anchor="start" stroke="#000" stroke-width="0.12">Airbase3</text>
<text x="1706" y="525.5" font-size="13.3" fill="#000" font-weight="normal" text-anchor="start" stroke="#000" stroke-width="0.12">Airbase4</text>
<text x="1683" y="544.7" font-size="13.3" fill="#000" font-weight="normal" text-anchor="start" stroke="#000" stroke-width="0.12">Port</text>
<text x="1706" y="563.9" font-size="13.3" fill="#000" font-weight="normal" text-anchor="start" stroke="#000" stroke-width="0.12">Port1</text>
<text x="1683" y="583.1" font-size="13.3" fill="#000" font-weight="normal" text-anchor="start" stroke="#000" stroke-width="0.12">Facility</text>
<text x="1706" y="602.3" font-size="13.3" fill="#000" font-weight="normal" text-anchor="start" stroke="#000" stroke-width="0.12">Depot1</text>
<text x="1683" y="621.5" font-size="13.3" fill="#000" font-weight="normal" text-anchor="start" stroke="#000" stroke-width="0.12">Others</text>
<text x="1154" y="898.6" font-size="13.6" fill="#000" font-weight="normal" text-anchor="start" textLength="389" lengthAdjust="spacingAndGlyphs" stroke="#000" stroke-width="0.15">2019-01-16 10:08:16 My Sec 7, 3rd Fighter Squadron lost 1 aircraft</text>
<text x="1154" y="916.6" font-size="13.6" fill="#000" font-weight="normal" text-anchor="start" textLength="389" lengthAdjust="spacingAndGlyphs" stroke="#000" stroke-width="0.15">2019-01-16 10:09:56 My Sec 1, 3rd Fighter Squadron lost 1 aircraft</text>
<text x="1154" y="934.6" font-size="13.6" fill="#000" font-weight="normal" text-anchor="start" textLength="378" lengthAdjust="spacingAndGlyphs" stroke="#000" stroke-width="0.15">2019-01-16 10:10:56 Enemy Sec 7, 23 Fighter Rgmt lost 1 aircraft</text>
<text x="1154" y="952.6" font-size="13.6" fill="#000" font-weight="normal" text-anchor="start" textLength="389" lengthAdjust="spacingAndGlyphs" stroke="#000" stroke-width="0.15">2019-01-16 10:12:36 My Sec 4, 3rd Fighter Squadron lost 1 aircraft</text>
<text x="1154" y="970.6" font-size="13.6" fill="#000" font-weight="normal" text-anchor="start" textLength="378" lengthAdjust="spacingAndGlyphs" stroke="#000" stroke-width="0.15">2019-01-16 10:12:56 My Sec 4, 3rd Fighter Squadron destroyed!!!</text>
<text x="1154" y="988.6" font-size="13.6" fill="#000" font-weight="normal" text-anchor="start" textLength="378" lengthAdjust="spacingAndGlyphs" stroke="#000" stroke-width="0.15">2019-01-16 10:15:36 Enemy Sec 1, 23 Fighter Rgmt lost 1 aircraft</text>
<text x="1536" y="952.8" font-size="24" fill="#c8c8c8" font-weight="normal" text-anchor="start" textLength="184" lengthAdjust="spacingAndGlyphs" >Activate Windows</text>
<text x="1533" y="977.6" font-size="17" fill="#c8c8c8" font-weight="normal" text-anchor="start" textLength="305" lengthAdjust="spacingAndGlyphs" >Go to PC settings to activate Windows.</text>
<text x="1107" y="938.5" font-size="11.5" fill="#f4f4f4" font-weight="normal" text-anchor="start" textLength="43" lengthAdjust="spacingAndGlyphs" >SIGNAL</text>
<text x="1662" y="20.2" font-size="13.3" fill="#000" font-weight="normal" text-anchor="start" >Show</text>
<text x="1708" y="18" font-size="13.3" fill="#000" font-weight="normal" text-anchor="start" >Me</text>
<text x="1800" y="18" font-size="13.3" fill="#000" font-weight="normal" text-anchor="start" >Japan</text>
</svg>
</body></html>
